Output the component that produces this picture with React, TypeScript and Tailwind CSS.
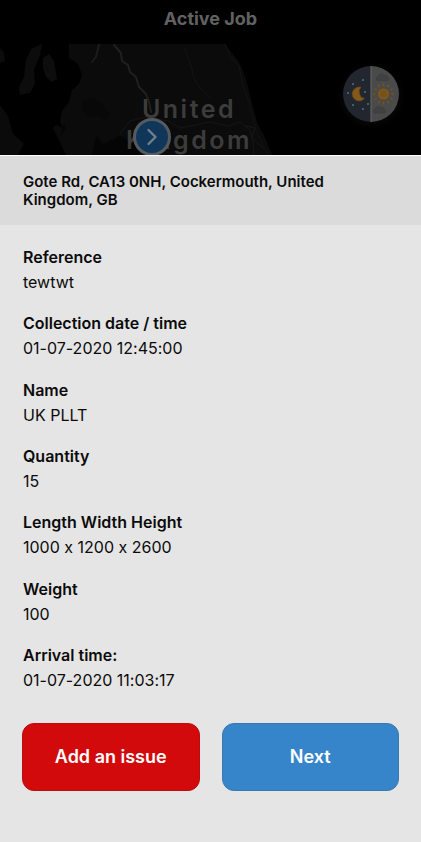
import { ChevronRight } from 'lucide-react'

type Detail = {
  label: string
  value: string
}

const details: Detail[] = [
  { label: 'Reference', value: 'tewtwt' },
  { label: 'Collection date / time', value: '01-07-2020 12:45:00' },
  { label: 'Name', value: 'UK PLLT' },
  { label: 'Quantity', value: '15' },
  { label: 'Length Width Height', value: '1000 x 1200 x 2600' },
  { label: 'Weight', value: '100' },
  { label: 'Arrival time:', value: '01-07-2020 11:03:17' }
]

const stars = [
  [20, 14],
  [10, 18],
  [5, 27],
  [22, 26],
  [10, 39],
  [25, 38],
  [20, 43]
]

function DayNightIcon() {
  return (
    <svg viewBox="0 0 56 56" className="w-14 h-14" aria-hidden="true">
      <path d="M28 0a28 28 0 0 0 0 56z" fill="#22272f" />
      <path d="M28 0a28 28 0 0 1 0 56z" fill="#4a4a4b" />
      <path d="M28 0v56" stroke="#666" strokeWidth="1" />
      {stars.map(([x, y]) => (
        <circle key={`${x}-${y}`} cx={x} cy={y} r="1" fill="#52708a" />
      ))}
      <path
        d="M18 21.200a7 7 0 1 0 3.500 11.300a6 6 0 0 1-5-5a6 6 0 0 1 1.500-6.300z"
        fill="#82591a"
        stroke="#694612"
        strokeWidth=".6"
      />
      <g stroke="#80520f" strokeWidth="1.400" strokeLinecap="round">
        {[0, 30, 60, 90, 120, 150, 180, 210, 240, 270, 300, 330].map((deg) => (
          <path key={deg} d="M40.500 19.500v-1.500" transform={`rotate(${deg} 40.500 28)`} />
        ))}
      </g>
      <circle cx="40.500" cy="28" r="5.500" fill="#80591a" />
      <circle cx="40.500" cy="28" r="3.500" fill="#765119" />
      <g fill="#404142" stroke="#3a3b3c" strokeWidth=".5">
        <path d="M34.500 14.500a2 2 0 0 1 .5-3.900a3.500 3.500 0 0 1 6-1.500a2.600 2.600 0 0 1 3.500 2.200a1.700 1.700 0 0 1 .5 3.200z" />
        <path d="M31.500 47a2 2 0 0 1 .5-3.900a3.500 3.500 0 0 1 6-1.500a2.600 2.600 0 0 1 3.500 2.200a1.700 1.700 0 0 1 .5 3.200z" />
      </g>
    </svg>
  )
}

function MapBackdrop() {
  return (
    <svg
      viewBox="0 0 421 111"
      preserveAspectRatio="xMidYMin slice"
      className="absolute inset-0 w-full h-full"
      aria-hidden="true"
    >
      <rect width="421" height="111" fill="#000" />
      <path
        d="M69 0L69 14L78 20L82 31L79 40L72 46L69 58L62 67L60 78L63 84L56 81L53 84L60 98L66 111H272L266 96L257 78L252 59L245 32L239 18L225 0z"
        fill="#0b0b0b"
      />
      <path d="M31 5L42 0L40 11L34 26L35 39L30 49L20 51L19 43L24 33L26 16z" fill="#0c0c0c" />
      <path d="M43 14L49 10L54 17L57 35L52 38L46 33L43 24z" fill="#0d0d0d" />
      <path d="M0 4L4 8L5 17L0 19zM0 61L8 72L13 90L24 100L18 111H0z" fill="#0b0b0b" />
      <path d="M82 56L93 54L102 60L110 70L106 76L98 72L88 73L82 66z" fill="#080808" />
      <path d="M60 92L66 85L64 79M92 111L96 92L103 100L120 92L135 99L140 111z" fill="#050505" />
      <g fill="none" strokeLinejoin="round" strokeLinecap="round">
        <path
          d="M114 1L121 9L122 17L128 21L130 28L136 33L139 43L146 50L149 58L151 68"
          stroke="#202020"
          strokeWidth="2"
        />
        <path d="M99 1L96 13L92 18" stroke="#1c1c1c" strokeWidth="2" />
        <path d="M184 3L192 25L193 32L200 44L211 54" stroke="#141414" />
        <path d="M120 90L130 77L146 73L168 77L180 84L210 78L228 82L240 78L250 86L253 97L254 111" stroke="#161616" />
        <path d="M225 0L230 12L239 22L243 42L249 58L256 86L268 111" stroke="#131313" />
        <path d="M246 82L255 84L252 94L263 104" stroke="#181818" />
      </g>
    </svg>
  )
}

export default function App() {
  return (
    <div className="min-h-screen flex flex-col bg-black font-['Inter','Liberation_Sans',sans-serif] text-[#0b0b0b] [font-feature-settings:'calt'_0]">
      <header className="h-11 px-4 pt-[7px] flex items-start justify-center">
        <h1 className="text-lg leading-6 font-bold text-[#626262]">Active Job</h1>
      </header>

      <section aria-label="Map" className="relative h-[111px] overflow-hidden">
        <MapBackdrop />
        <p className="relative pt-[50px] pr-[43px] text-center text-[25px] leading-[31px] font-semibold tracking-widest text-[#3c3c3c]">
          United
          <br />
          Kingdom
        </p>
        <button
          type="button"
          aria-label="Show location"
          className="absolute left-[133px] top-[74px] w-[38px] h-[38px] rounded-full border-3 border-[#555a60] bg-[#10365a] text-[#73808c] flex items-center justify-center"
        >
          <ChevronRight className="w-7 h-7" strokeWidth={2} />
        </button>
        <button
          type="button"
          aria-label="Switch day or night map"
          className="absolute right-[22px] top-[22px] rounded-full shadow-[0_2px_8px_#0c0c0c]"
        >
          <DayNightIcon />
        </button>
      </section>

      <main className="flex-1 flex flex-col bg-[#e5e5e5]">
        <div className="border-t border-white bg-[#dbdbdb] px-[23px] pt-[17px] pb-4">
          <p className="max-w-80 text-[15px] leading-[18px] font-semibold">
            Gote Rd, CA13 0NH, Cockermouth, United Kingdom, GB
          </p>
        </div>

        <dl className="flex-1 flex flex-col justify-between gap-4 px-[23px] pt-5">
          {details.map((d) => (
            <div key={d.label}>
              <dt className="text-base leading-6 font-semibold">{d.label}</dt>
              <dd className="text-base leading-[26px]">{d.value}</dd>
            </div>
          ))}
        </dl>

        <div className="grid grid-cols-2 gap-[22px] px-[22px] pt-[30px] pb-[51px]">
          <button
            type="button"
            className="h-[68px] rounded-xl border border-[#b90d10] bg-[#d20a0c] text-lg font-semibold text-white"
          >
            Add an issue
          </button>
          <button
            type="button"
            className="h-[68px] rounded-xl border border-[#3a79b0] bg-[#3685ca] text-lg font-semibold text-white"
          >
            Next
          </button>
        </div>
      </main>
    </div>
  )
}
